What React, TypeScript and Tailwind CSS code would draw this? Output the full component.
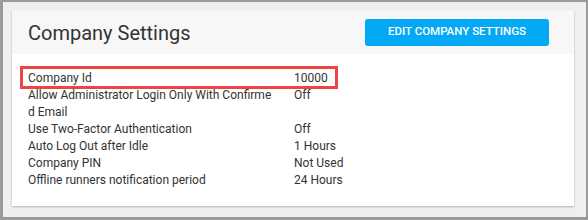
import React from "react";

const CompanySettingsCard = () => {
  interface Setting {
    label: string;
    value: string;
  }

  const settings: Setting[] = [
    { label: "Company Id", value: "10000" },
    { label: "Allow Administrator Login Only With Confirmed Email", value: "Off" },
    { label: "Use Two-Factor Authentication", value: "Off" },
    { label: "Auto Log Out after Idle", value: "1 Hours" },
    { label: "Company PIN", value: "Not Used" },
    { label: "Offline runners notification period", value: "24 Hours" },
  ];

  return (
    <div
      className="w-[588px] h-[220px] border-l-[3px] border-t-2 border-r-2 border-b-[3px] border-[#9a9a9a] bg-[#eeeff0] overflow-hidden"
      style={{ fontFamily: "Roboto, 'Liberation Sans', sans-serif" }}
    >
      <div className="ml-[9px] mt-[8px] w-[562px] h-[196px] bg-white shadow-[0_1px_2px_rgba(0,0,0,0.25)]">
        {/* Header */}
        <div className="h-[44px] bg-[#f7f7f7] flex items-center justify-between pl-[16px] pr-[25px]">
          <h1 className="text-[20px] text-[#333] leading-none pt-[1px]">Company Settings</h1>
          <button className="w-[184px] h-[27px] rounded-[3px] bg-[#03a9f4] text-white text-[11.5px] font-medium">
            EDIT COMPANY SETTINGS
          </button>
        </div>

        {/* Settings list */}
        <div className="relative pt-[16px] pl-[16px] text-[12px] leading-[17px] text-[#333]">
          {settings.map((s) => (
            <div key={s.label} className="flex">
              <div className="w-[246px] break-all">{s.label}</div>
              <div className="ml-[20px]">{s.value}</div>
            </div>
          ))}
          {/* highlight box */}
          <div className="absolute left-[8px] top-[12px] w-[318px] h-[23px] border-[3px] border-[#ef4444]" />
        </div>
      </div>
    </div>
  );
};

export default function App() {
  return <CompanySettingsCard />;
}
